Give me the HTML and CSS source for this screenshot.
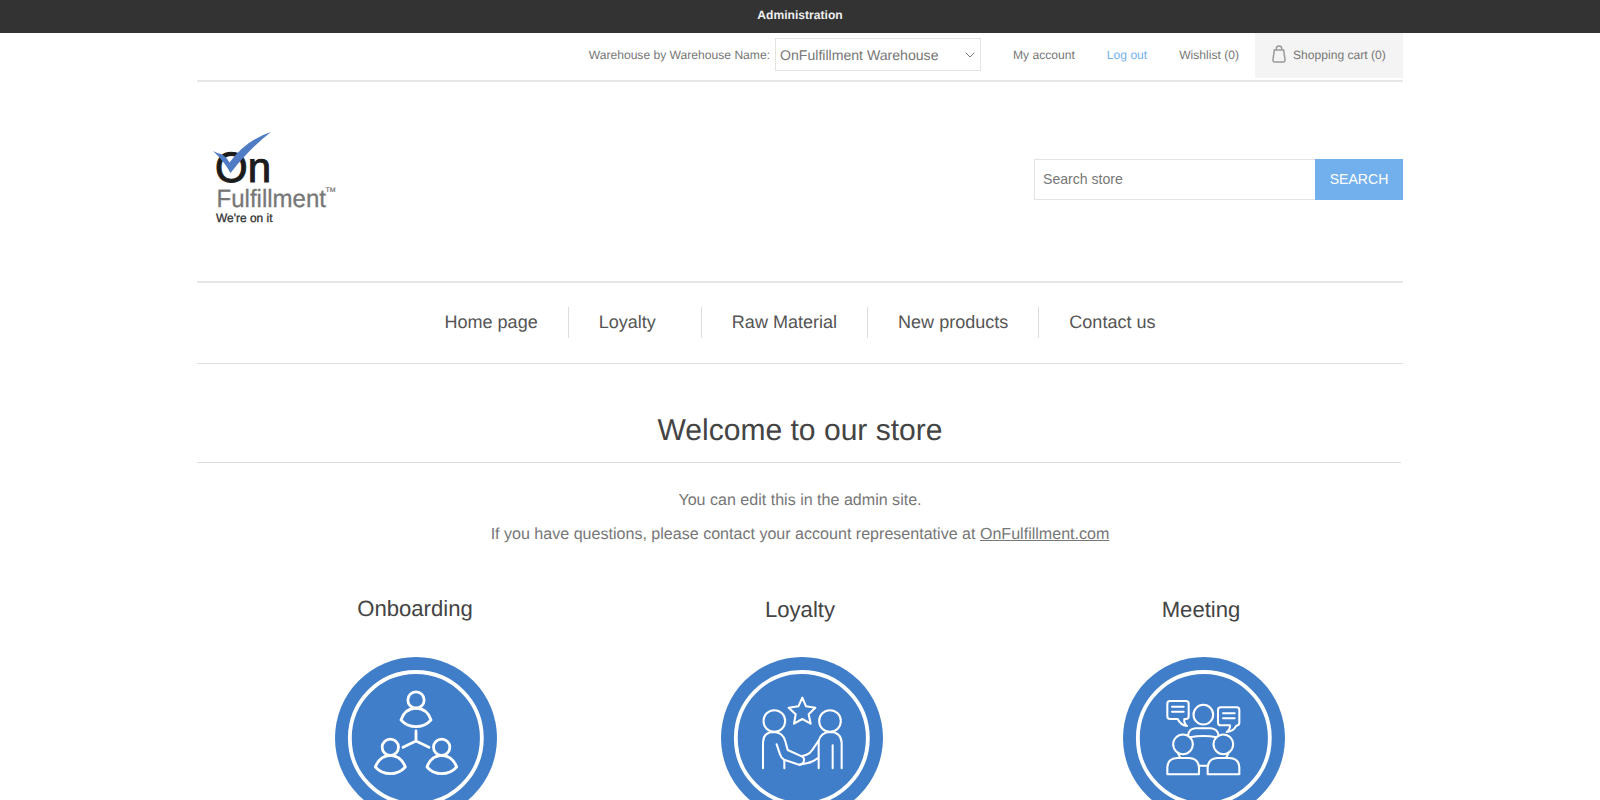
FILE: index.html
```html
<!DOCTYPE html>
<html lang="en">
<head>
  <meta charset="UTF-8">
  <title>Your store. Home page</title>
  <link rel="stylesheet" href="styles.css">
</head>
<body>
  <div class="admin-header-links">
    <a href="#" class="administration">Administration</a>
  </div>

  <div class="master-wrapper">
    <div class="header-upper">
      <label class="warehouse-label">Warehouse by Warehouse Name:</label>
      <div class="warehouse-select">
        <span>OnFulfillment Warehouse</span>
        <svg class="chevron" viewBox="0 0 10 6"><path d="M0.7 0.7 L5 5 L9.3 0.7"/></svg>
      </div>
      <a href="#" class="ico-account">My account</a>
      <a href="#" class="ico-logout">Log out</a>
      <a href="#" class="ico-wishlist">Wishlist (0)</a>
      <a href="#" class="ico-cart">
        <svg class="bag" viewBox="0 0 42 54">
          <path d="M7 15 H35 L39 44 Q40 51 34 51 H8 Q2 51 3 44 Z"/>
          <path d="M13 15 V10 Q13 3 21 3 Q29 3 29 10 V15"/>
        </svg>
        <span>Shopping cart (0)</span>
      </a>
    </div>

    <div class="header-lower">
      <a href="#" class="header-logo">
        <svg viewBox="0 0 170 130">
          <text class="logo-on" x="25" y="71.5" textLength="56" lengthAdjust="spacingAndGlyphs">On</text>
          <path class="logo-check" d="M23 41 L28 43.3 Q34 43.5 39.5 52.5 Q56 30 81 22 Q60 38 40.5 63 Q34 51 23 41 Z"/>
          <text class="logo-name" x="26.5" y="97" textLength="109.5" lengthAdjust="spacingAndGlyphs">Fulfillment</text>
          <text class="logo-tm" x="135.5" y="82" textLength="10" lengthAdjust="spacingAndGlyphs">TM</text>
          <text class="logo-tag" x="26" y="112" textLength="56.5" lengthAdjust="spacingAndGlyphs">We're on it</text>
        </svg>
      </a>
      <form class="search-box">
        <input type="text" class="search-text" placeholder="Search store">
        <button type="button" class="search-button">SEARCH</button>
      </form>
    </div>

    <ul class="header-menu">
      <li><a href="#">Home page</a></li>
      <li class="has-sublist"><a href="#">Loyalty</a></li>
      <li><a href="#">Raw Material</a></li>
      <li><a href="#">New products</a></li>
      <li><a href="#">Contact us</a></li>
    </ul>

    <div class="topic-block">
      <h1>Welcome to our store</h1>
      <p>You can edit this in the admin site.</p>
      <p>If you have questions, please contact your account representative at <a href="#">OnFulfillment.com</a></p>
    </div>

    <div class="category-grid">
      <div class="item-box onboarding">
        <h2>Onboarding</h2>
        <svg class="picture" viewBox="45 51 486 486">
          <circle class="disc" cx="288" cy="294" r="243"/>
          <circle class="ring" cx="287.5" cy="294" r="198"/>
          <g class="lines bold">
            <circle cx="288" cy="180" r="24.5"/>
            <path d="M288 204 Q322 206 333 240 Q315 260 288 260 Q261 260 243 240 Q254 206 288 204 Z"/>
            <circle cx="211" cy="322" r="24.5"/>
            <path d="M211 346 Q244 348 256 381 Q238 401 211 401 Q184 401 166 381 Q178 348 211 346 Z"/>
            <circle cx="365" cy="322" r="24.5"/>
            <path d="M365 346 Q398 348 410 381 Q392 401 365 401 Q338 401 321 381 Q332 348 365 346 Z"/>
            <path d="M288 273 V303 M249 322 L288 303 L327 322"/>
          </g>
        </svg>
      </div>
      <div class="item-box loyalty">
        <h2>Loyalty</h2>
        <svg class="picture" viewBox="45 51 486 486">
          <circle class="disc" cx="288" cy="294" r="243"/>
          <circle class="ring" cx="287.5" cy="294" r="198"/>
          <g class="lines">
            <path d="M289 173 L300 199 L328 203 L308 223 L314 251 L289 237 L264 251 L269 223 L248 203 L277 199 Z"/>
            <circle cx="205" cy="243" r="32.5"/>
            <circle cx="372" cy="243" r="32.5"/>
            <path d="M171 385 V308 Q171 276 204 276 Q231 277 238 304 L245 330 L289 350 Q295 352 294 361 Q292 374 279 374 L234 359 Q225 354 222 343 L212 313"/>
            <path d="M235 360 V385"/>
            <path d="M407 385 V308 Q405 276 372 276 Q345 277 338 302 L318 331 Q312 341 302 344 L289 348"/>
            <path d="M338 302 V385 M380 316 V385 M280 374 L302 370 Q322 366 336 354"/>
          </g>
        </svg>
      </div>
      <div class="item-box meeting">
        <h2>Meeting</h2>
        <svg class="picture" viewBox="45 51 486 486">
          <circle class="disc" cx="288" cy="294" r="243"/>
          <circle class="ring" cx="287.5" cy="294" r="198"/>
          <g class="lines">
            <path d="M186 183 H234 Q242 183 242 191 V229 Q242 237 234 237 H229 Q227 249 237 258 Q217 255 209 237 H186 Q178 237 178 229 V191 Q178 183 186 183 Z"/>
            <path d="M192 200 H227 M192 215 H227"/>
            <path d="M338 202 H386 Q394 202 394 210 V248 Q394 256 385 257 Q377 274 356 276 Q367 268 366 256 H338 Q330 256 330 248 V210 Q330 202 338 202 Z"/>
            <path d="M345 220 H380 M345 235 H380"/>
            <circle cx="286" cy="224" r="29.5"/>
            <circle cx="225" cy="313" r="29.5"/>
            <circle cx="346" cy="313" r="29.5"/>
            <path d="M240 287 Q242 266 263 265 H308 Q329 266 332 287"/>
            <path d="M246 292 Q286 284 326 292"/>
            <path d="M178 403 V382 Q179 355 208 354 H243 Q271 355 273 382 V403 Z"/>
            <path d="M299 403 V382 Q301 355 329 354 H364 Q393 355 394 382 V403 Z"/>
            <path d="M210 340 L216 352 M361 340 L355 352 M273 377 H299"/>
          </g>
        </svg>
      </div>
    </div>
  </div>
</body>
</html>
```

FILE: styles.css
```css
* {
  box-sizing: border-box;
  margin: 0;
  padding: 0;
}
body {
  height: 800px;
  overflow: hidden;
  background: #fff;
  font-family: "Liberation Sans", Arial, sans-serif;
  font-size: 14px;
  color: #777;
  text-rendering: geometricPrecision;
}
a {
  color: inherit;
  text-decoration: none;
}
.admin-header-links {
  height: 33px;
  background: #333;
  text-align: center;
  line-height: 29px;
}
.administration {
  font-size: 12.1px;
  font-weight: bold;
  color: #eee;
}
.master-wrapper {
  width: 1206px;
  margin: 0 auto;
}

/* top links */
.header-upper {
  display: flex;
  justify-content: flex-end;
  height: 49px;
  border-bottom: 2px solid #e6e6e6;
  font-size: 12.1px;
  line-height: 44px;
}
.warehouse-select {
  display: flex;
  align-items: center;
  justify-content: space-between;
  width: 206px;
  height: 33px;
  margin: 5px 32px 0 5px;
  padding: 0 5px 0 4px;
  border: 1.5px solid #e3e3e3;
  font-size: 14.1px;
  line-height: 30px;
}
.chevron {
  width: 10px;
  height: 6px;
  fill: none;
  stroke: #777;
}
.ico-logout {
  margin: 0 32px;
  color: #74b0ee;
}
.ico-wishlist {
  margin-right: 16px;
}
.ico-cart {
  display: flex;
  width: 148px;
  height: 45px;
  padding-left: 17px;
  background: #f4f4f4;
}
.bag {
  width: 14px;
  height: 18px;
  margin: 12px 7px 0 0;
  fill: none;
  stroke: #999;
  stroke-width: 4.5;
}

/* logo and search */
.header-lower {
  display: flex;
  justify-content: space-between;
  height: 201px;
  border-bottom: 2px solid #e6e6e6;
}
.header-logo svg {
  display: block;
  width: 170px;
  height: 130px;
  margin: 28px 0 0 -7px;
}
.logo-on {
  font-size: 42.5px;
  fill: #1c1c1c;
  stroke: #1c1c1c;
  stroke-width: 1;
}
.logo-check {
  fill: #4f7cc4;
}
.logo-name {
  font-size: 25px;
  fill: #777;
  stroke: #777;
  stroke-width: 0.3;
}
.logo-tm {
  font-size: 6.5px;
  fill: #777;
  stroke: #777;
  stroke-width: 0.2;
}
.logo-tag {
  font-size: 12px;
  fill: #333;
  stroke: #333;
  stroke-width: 0.3;
}
.search-box {
  display: flex;
  height: 41px;
  margin-top: 77px;
}
.search-text {
  width: 281px;
  padding: 0 0 1px 8px;
  border: 1.5px solid #e3e3e3;
  border-right: none;
  font-family: inherit;
  font-size: 14.1px;
}
.search-text::placeholder {
  color: #777;
}
.search-button {
  width: 88px;
  padding-bottom: 1px;
  border: none;
  background: #72afed;
  color: #fff;
  font-family: inherit;
  font-size: 14.1px;
}

/* main menu */
.header-menu {
  display: flex;
  justify-content: center;
  height: 81px;
  padding-top: 24px;
  border-bottom: 1px solid #ddd;
  list-style: none;
}
.header-menu li {
  height: 31px;
  padding: 0 30px;
  border-left: 1px solid #ddd;
  font-size: 18.05px;
  line-height: 30px;
  color: #555;
}
.header-menu li:first-child {
  border-left: none;
}
.header-menu .has-sublist {
  padding-right: 45px;
}

/* welcome text */
.topic-block {
  text-align: center;
}
.topic-block h1 {
  height: 99px;
  margin: 0 2px 27px 0;
  padding: 47px 0 0 2px;
  border-bottom: 1px solid #ddd;
  font-size: 30.05px;
  font-weight: normal;
  line-height: 39px;
  color: #444;
}
.topic-block p {
  height: 34px;
  font-size: 16.07px;
  line-height: 21px;
}
.topic-block p a {
  text-decoration: underline;
}

/* category circles */
.category-grid {
  display: grid;
  grid-template-columns: 386px 384px 384px;
  margin-top: 37px;
  padding-left: 25px;
}
.item-box h2 {
  height: 62px;
  font-size: 22.1px;
  font-weight: normal;
  line-height: 28px;
  text-align: center;
  color: #444;
}
.loyalty h2,
.meeting h2 {
  padding-top: 1px;
}
.meeting {
  margin-left: 17px;
  margin-right: -17px;
}
.picture {
  display: block;
  width: 162px;
  height: 162px;
  margin-left: 113px;
}
.meeting .picture {
  margin-left: 114px;
}
.disc {
  fill: #407ec9;
}
.ring {
  fill: none;
  stroke: #fff;
  stroke-width: 11.5;
}
.lines {
  fill: none;
  stroke: #fff;
  stroke-width: 6.2;
  stroke-linecap: round;
  stroke-linejoin: round;
}
.bold {
  stroke-width: 8.4;
}
```
